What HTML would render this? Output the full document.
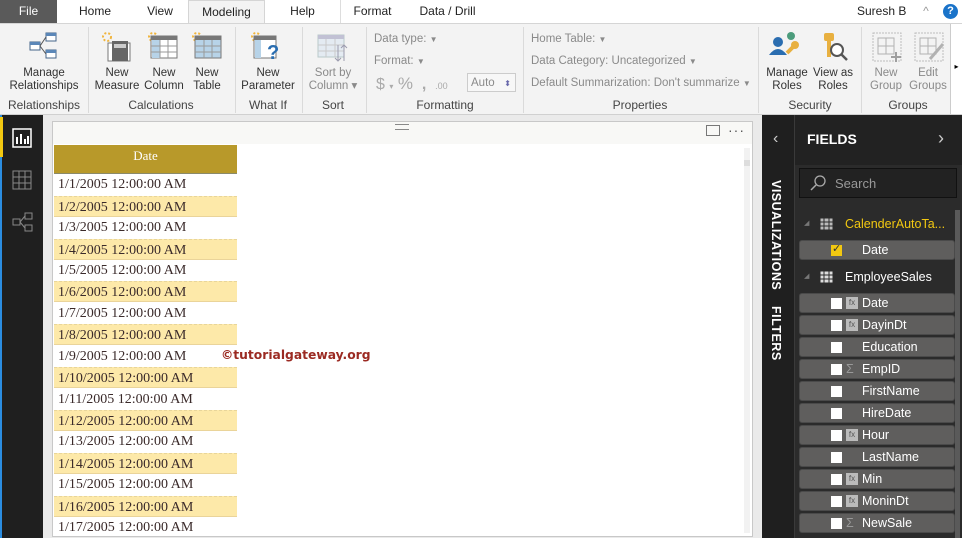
<!DOCTYPE html>
<html><head><meta charset="utf-8">
<style>
*{margin:0;padding:0;box-sizing:border-box}
html,body{width:962px;height:538px;overflow:hidden}
body{position:relative;font-family:"Liberation Sans",sans-serif;background:#eaeaea}
.a{position:absolute}
.tab{position:absolute;top:0;height:23px;line-height:23px;font-size:12px;color:#222;text-align:center}
.rb{font-size:11.5px;color:#333;text-align:center;line-height:13px}
.gl{position:absolute;top:98px;font-size:12px;color:#444;text-align:center}
.sep{position:absolute;top:27px;width:1px;height:86px;background:#dadada}
.dis{color:#8a8a8a}
.row{position:absolute;left:54px;width:183px;height:21.4px;font-family:"Liberation Serif",serif;font-size:14px;color:#3a2a2a;padding-left:4px;line-height:22px;white-space:nowrap}
.y{background:#fde9a9;border-top:1px dashed #e8d59a;border-bottom:1px solid #ead49a}
.fi{position:absolute;left:799px;width:156px;height:20px;background:#5f5e5d;border:1px solid #4a4a4a;border-radius:3px;color:#fff;font-size:12.5px;line-height:18px}
.cb{position:absolute;left:31px;top:4px;width:11px;height:11px;background:#fff}
.ic{position:absolute;left:46px;top:3px;width:12px;height:12px;background:#bbb;font-size:8px;color:#555;line-height:12px;text-align:center}
.fi span.t{position:absolute;left:62px}
</style></head><body>
<div class="a" style="left:0;top:0;width:962px;height:23px;background:#fff"></div>
<div class="tab" style="left:0;width:57px;background:#5a5a5a;color:#fff">File</div>
<div class="tab" style="left:65px;width:60px">Home</div>
<div class="tab" style="left:135px;width:50px">View</div>
<div class="tab" style="left:188px;width:77px;background:#f3f3f3;border:1px solid #d5d5d5;border-bottom:none;height:24px">Modeling</div>
<div class="tab" style="left:275px;width:55px">Help</div>
<div class="a" style="left:340px;top:0;width:1px;height:23px;background:#ddd"></div>
<div class="tab" style="left:345px;width:55px">Format</div>
<div class="tab" style="left:410px;width:75px">Data / Drill</div>
<div class="tab" style="left:857px;width:60px;text-align:left;color:#222">Suresh B</div>
<div class="tab" style="left:920px;width:12px;color:#999">^</div>
<div class="a" style="left:943px;top:4px;width:15px;height:15px;border-radius:50%;background:#1a73c9;color:#fff;font-size:11px;text-align:center;line-height:15px;font-weight:bold">?</div>
<div class="a" style="left:0;top:23px;width:962px;height:92px;background:#f3f3f3;border-top:1px solid #d5d5d5;border-bottom:1px solid #d0d0d0"></div>
<svg class="a" style="left:28px;top:31px" width="32" height="32" viewBox="0 0 32 32"><rect x="2" y="11" width="10" height="8" fill="#fff" stroke="#46648a"/><rect x="18" y="2" width="10" height="8" fill="#fff" stroke="#46648a"/><rect x="18" y="19" width="10" height="8" fill="#fff" stroke="#46648a"/><path d="M12 15 L18 6 M12 15 L18 23" stroke="#555" fill="none"/><rect x="2" y="11" width="10" height="3" fill="#5b87b8"/><rect x="18" y="2" width="10" height="3" fill="#5b87b8"/><rect x="18" y="19" width="10" height="3" fill="#5b87b8"/></svg>
<div class="a rb" style="left:2px;top:67px;width:84px">Manage<br>Relationships</div>
<div class="gl" style="left:2px;width:84px">Relationships</div>
<div class="sep" style="left:88px"></div>
<svg class="a" style="left:100px;top:31px" width="32" height="32"><circle cx="7" cy="6" r="4" fill="none" stroke="#f0b43c" stroke-width="2" stroke-dasharray="2 2"/><rect x="8" y="12" width="22" height="18" fill="#fff" stroke="#777"/><rect x="12" y="10" width="16" height="20" fill="#666"/><rect x="14" y="13" width="12" height="4" fill="#ccc"/></svg>
<div class="a rb" style="left:92px;top:67px;width:50px">New<br>Measure</div>
<svg class="a" style="left:147px;top:31px" width="32" height="32"><circle cx="6" cy="6" r="4" fill="none" stroke="#f0b43c" stroke-width="2" stroke-dasharray="2 2"/><rect x="4" y="5" width="26" height="22" fill="#fff" stroke="#777"/><rect x="4" y="5" width="26" height="4" fill="#777"/><rect x="5" y="9" width="8" height="18" fill="#b7d3e8"/><path d="M4 15H30M4 21H30M13 9V27M21 9V27" stroke="#999"/></svg>
<div class="a rb" style="left:143px;top:67px;width:42px">New<br>Column</div>
<svg class="a" style="left:191px;top:31px" width="32" height="32"><circle cx="6" cy="6" r="4" fill="none" stroke="#f0b43c" stroke-width="2" stroke-dasharray="2 2"/><rect x="4" y="5" width="26" height="22" fill="#b7d3e8" stroke="#777"/><rect x="4" y="5" width="26" height="4" fill="#777"/><path d="M4 15H30M4 21H30M13 9V27M21 9V27" stroke="#999"/></svg>
<div class="a rb" style="left:187px;top:67px;width:40px">New<br>Table</div>
<div class="gl" style="left:92px;width:138px">Calculations</div>
<div class="sep" style="left:235px"></div>
<svg class="a" style="left:250px;top:31px" width="32" height="32"><circle cx="6" cy="6" r="4" fill="none" stroke="#f0b43c" stroke-width="2" stroke-dasharray="2 2"/><rect x="4" y="5" width="22" height="22" fill="#fff" stroke="#777"/><rect x="4" y="5" width="22" height="4" fill="#777"/><rect x="5" y="9" width="6" height="18" fill="#b7d3e8"/><text x="17" y="28" font-size="20" font-weight="bold" fill="#2a6db0" font-family="Liberation Sans">?</text></svg>
<div class="a rb" style="left:238px;top:67px;width:60px">New<br>Parameter</div>
<div class="gl" style="left:238px;width:60px">What If</div>
<div class="sep" style="left:302px"></div>
<svg class="a" style="left:316px;top:33px" width="34" height="32" opacity=".55"><rect x="2" y="2" width="26" height="22" fill="#d8e6f2" stroke="#8aa"/><rect x="2" y="2" width="26" height="4" fill="#99b"/><path d="M2 12H28M2 18H28M10 6V24M19 6V24" stroke="#aaa"/><path d="M22 12V28M19 25L22 28L25 25M28 28V12M25 15L28 12L31 15" stroke="#557" fill="none"/></svg>
<div class="a rb dis" style="left:305px;top:67px;width:56px">Sort by<br>Column ▾</div>
<div class="gl" style="left:305px;width:56px">Sort</div>
<div class="sep" style="left:366px"></div>
<div class="a rb dis" style="left:374px;top:33px;text-align:left">Data type: <span style="font-size:8px">▼</span></div>
<div class="a rb dis" style="left:374px;top:55px;text-align:left">Format: <span style="font-size:8px">▼</span></div>
<div class="a dis" style="left:376px;top:74px;font-size:16px;color:#aaa">$ <span style="font-size:8px">▾</span> <span style="font-size:17px">%</span> &nbsp;<b>,</b> &nbsp;<span style="font-size:9px">.00</span></div>
<div class="a rb dis" style="left:467px;top:73px;width:49px;height:19px;border:1px solid #ccc;background:#f7f7f7;text-align:left;padding:3px 0 0 3px">Auto <span style="color:#66a;font-size:8px;float:right;margin-right:4px">⬍</span></div>
<div class="gl" style="left:370px;width:150px">Formatting</div>
<div class="sep" style="left:523px"></div>
<div class="a rb dis" style="left:531px;top:33px;text-align:left">Home Table: <span style="font-size:8px">▼</span></div>
<div class="a rb dis" style="left:531px;top:55px;text-align:left">Data Category: Uncategorized <span style="font-size:8px">▼</span></div>
<div class="a rb dis" style="left:531px;top:77px;text-align:left">Default Summarization: Don't summarize <span style="font-size:8px">▼</span></div>
<div class="gl" style="left:526px;width:228px">Properties</div>
<div class="sep" style="left:758px"></div>
<svg class="a" style="left:767px;top:31px" width="36" height="32"><circle cx="24" cy="5" r="4" fill="#4c9c7c"/><circle cx="11" cy="11" r="5" fill="#2a6db0"/><path d="M2 24Q11 12 20 24Z" fill="#2a6db0"/><path d="M20 22 L28 14" stroke="#e8b040" stroke-width="4"/><circle cx="28" cy="14" r="4" fill="#e8b040"/></svg>
<div class="a rb" style="left:763px;top:67px;width:48px">Manage<br>Roles</div>
<svg class="a" style="left:820px;top:31px" width="32" height="32"><rect x="4" y="2" width="10" height="8" rx="2" fill="#e8b040"/><rect x="7" y="10" width="4" height="16" fill="#e8b040"/><circle cx="17" cy="19" r="6" fill="#fff" stroke="#555" stroke-width="2"/><path d="M21 23L27 29" stroke="#555" stroke-width="2.5"/></svg>
<div class="a rb" style="left:811px;top:67px;width:44px">View as<br>Roles</div>
<div class="gl" style="left:760px;width:100px">Security</div>
<div class="sep" style="left:861px"></div>
<svg class="a" style="left:872px;top:32px" width="32" height="32" opacity=".6"><rect x="1" y="1" width="28" height="28" fill="none" stroke="#999" stroke-dasharray="2 1"/><path d="M6 6H22V22H6ZM14 6V22M6 14H22" stroke="#888" fill="none"/><path d="M24 20V30M19 25H29" stroke="#666" stroke-width="2"/></svg>
<div class="a rb dis" style="left:866px;top:67px;width:40px">New<br>Group</div>
<svg class="a" style="left:914px;top:32px" width="32" height="32" opacity=".6"><rect x="1" y="1" width="28" height="28" fill="none" stroke="#999" stroke-dasharray="2 1"/><path d="M6 6H22V22H6ZM14 6V22M6 14H22" stroke="#888" fill="none"/><path d="M16 27L29 12" stroke="#888" stroke-width="3"/></svg>
<div class="a rb dis" style="left:907px;top:67px;width:42px">Edit<br>Groups</div>
<div class="gl" style="left:864px;width:88px">Groups</div>
<div class="a" style="left:950px;top:24px;width:12px;height:90px;background:#fff;border-left:1px solid #ccc;font-size:8px;text-align:center;line-height:86px">▸</div>
<div class="a" style="left:0;top:115px;width:43px;height:423px;background:#1f1f1f"></div>
<div class="a" style="left:0;top:115px;width:2px;height:423px;background:#2b8de0"></div>
<div class="a" style="left:0;top:117px;width:3px;height:40px;background:#f2c811"></div>
<svg class="a" style="left:12px;top:128px" width="20" height="20"><rect x="1" y="1" width="18" height="18" fill="none" stroke="#fff" stroke-width="1.5"/><path d="M5 16V9M9 16V6M13 16V11M16 16V8" stroke="#fff" stroke-width="2"/></svg>
<svg class="a" style="left:12px;top:170px" width="20" height="20"><path d="M1 1H19V19H1ZM1 7H19M1 13H19M7 1V19M13 1V19" stroke="#888" fill="none"/></svg>
<svg class="a" style="left:12px;top:212px" width="22" height="20"><rect x="1" y="7" width="7" height="6" fill="none" stroke="#888"/><rect x="13" y="1" width="7" height="6" fill="none" stroke="#888"/><rect x="13" y="13" width="7" height="6" fill="none" stroke="#888"/><path d="M8 10L13 4M8 10L13 16" stroke="#888"/></svg>
<div class="a" style="left:52px;top:121px;width:701px;height:416px;background:#fff;border:1px solid #c8c8c8"></div>
<div class="a" style="left:53px;top:122px;width:699px;height:22px;background:#f8f8f6"></div>
<div class="a" style="left:395px;top:124px;width:14px;height:6px;border-top:1px solid #888;border-bottom:1px solid #888"></div>
<div class="a" style="left:706px;top:125px;width:14px;height:11px;border:1px solid #777"></div>
<div class="a" style="left:728px;top:122px;font-size:14px;color:#555;letter-spacing:1px">···</div>
<div class="a" style="left:744px;top:148px;width:6px;height:385px;background:#f2f2f2"></div>
<div class="a" style="left:744px;top:160px;width:6px;height:6px;background:#ddd"></div>
<div class="a" style="left:54px;top:145px;width:183px;height:29px;background:#b8992a;color:#fff;font-family:'Liberation Serif',serif;font-size:13px;text-align:center;line-height:22px;border-bottom:1px solid #8a8a6a">Date</div>
<div class="row" style="top:174px">1/1/2005 12:00:00 AM</div>
<div class="row y" style="top:196px">1/2/2005 12:00:00 AM</div>
<div class="row" style="top:217px">1/3/2005 12:00:00 AM</div>
<div class="row y" style="top:239px">1/4/2005 12:00:00 AM</div>
<div class="row" style="top:260px">1/5/2005 12:00:00 AM</div>
<div class="row y" style="top:281px">1/6/2005 12:00:00 AM</div>
<div class="row" style="top:303px">1/7/2005 12:00:00 AM</div>
<div class="row y" style="top:324px">1/8/2005 12:00:00 AM</div>
<div class="row" style="top:346px">1/9/2005 12:00:00 AM</div>
<div class="row y" style="top:367px">1/10/2005 12:00:00 AM</div>
<div class="row" style="top:389px">1/11/2005 12:00:00 AM</div>
<div class="row y" style="top:410px">1/12/2005 12:00:00 AM</div>
<div class="row" style="top:431px">1/13/2005 12:00:00 AM</div>
<div class="row y" style="top:453px">1/14/2005 12:00:00 AM</div>
<div class="row" style="top:474px">1/15/2005 12:00:00 AM</div>
<div class="row y" style="top:496px">1/16/2005 12:00:00 AM</div>
<div class="row" style="top:517px">1/17/2005 12:00:00 AM</div>
<div class="a" style="left:221px;top:348px;font-size:12.3px;font-weight:bold;color:#9b2a22;font-family:'DejaVu Sans',sans-serif">©tutorialgateway.org</div>
<div class="a" style="left:762px;top:115px;width:33px;height:423px;background:#1f1f1f;border-right:1px solid #3a3a3a"></div>
<div class="a" style="left:773px;top:130px;color:#ccc;font-size:16px">‹</div>
<div class="a" style="left:769px;top:180px;color:#fff;font-size:12.5px;writing-mode:vertical-rl;letter-spacing:0.5px;font-weight:bold">VISUALIZATIONS</div>
<div class="a" style="left:769px;top:306px;color:#fff;font-size:12.5px;writing-mode:vertical-rl;letter-spacing:0.5px;font-weight:bold">FILTERS</div>
<div class="a" style="left:795px;top:115px;width:167px;height:423px;background:#2b2b2b"></div>
<div class="a" style="left:795px;top:115px;width:167px;height:50px;background:#222"></div>
<div class="a" style="left:807px;top:131px;color:#fff;font-size:14px;font-weight:bold">FIELDS</div>
<div class="a" style="left:938px;top:128px;color:#ccc;font-size:18px">›</div>
<div class="a" style="left:799px;top:168px;width:158px;height:30px;background:#222;border:1px solid #111"></div>
<svg class="a" style="left:810px;top:175px" width="16" height="16"><circle cx="10" cy="6" r="5" fill="none" stroke="#aaa" stroke-width="1.3"/><path d="M6 10L1 15" stroke="#aaa" stroke-width="1.5"/></svg>
<div class="a" style="left:835px;top:176px;color:#999;font-size:13px">Search</div>
<div class="a" style="left:955px;top:210px;width:5px;height:328px;background:#5a5a5a"></div>
<div class="a" style="left:804px;top:219px;color:#777;font-size:7px">◢</div>
<svg class="a" style="left:820px;top:218px" width="13" height="12"><path d="M0 0H13V12H0ZM0 4H13M0 8H13M4 0V12M9 0V12" stroke="#2b2b2b" fill="#bbb"/></svg>
<div class="a" style="left:845px;top:217px;color:#f2c811;font-size:12.5px">CalenderAutoTa...</div>
<div class="fi" style="top:240px"><div class="cb" style="background:#f2c811"></div><span style="position:absolute;left:32px;top:-1px;color:#333;font-size:11px">✓</span><span class="t">Date</span></div>
<div class="a" style="left:804px;top:272px;color:#777;font-size:7px">◢</div>
<svg class="a" style="left:820px;top:271px" width="13" height="12"><path d="M0 0H13V12H0ZM0 4H13M0 8H13M4 0V12M9 0V12" stroke="#2b2b2b" fill="#ddd"/></svg>
<div class="a" style="left:845px;top:270px;color:#fff;font-size:12.5px">EmployeeSales</div>
<div class="fi" style="top:293px"><div class="cb"></div><div class="ic">fx</div><span class="t">Date</span></div>
<div class="fi" style="top:315px"><div class="cb"></div><div class="ic">fx</div><span class="t">DayinDt</span></div>
<div class="fi" style="top:337px"><div class="cb"></div><span class="t">Education</span></div>
<div class="fi" style="top:359px"><div class="cb"></div><span style="position:absolute;left:46px;color:#999">Σ</span><span class="t">EmpID</span></div>
<div class="fi" style="top:381px"><div class="cb"></div><span class="t">FirstName</span></div>
<div class="fi" style="top:403px"><div class="cb"></div><span class="t">HireDate</span></div>
<div class="fi" style="top:425px"><div class="cb"></div><div class="ic">fx</div><span class="t">Hour</span></div>
<div class="fi" style="top:447px"><div class="cb"></div><span class="t">LastName</span></div>
<div class="fi" style="top:469px"><div class="cb"></div><div class="ic">fx</div><span class="t">Min</span></div>
<div class="fi" style="top:491px"><div class="cb"></div><div class="ic">fx</div><span class="t">MoninDt</span></div>
<div class="fi" style="top:513px"><div class="cb"></div><span style="position:absolute;left:46px;color:#999">Σ</span><span class="t">NewSale</span></div>
</body></html>
